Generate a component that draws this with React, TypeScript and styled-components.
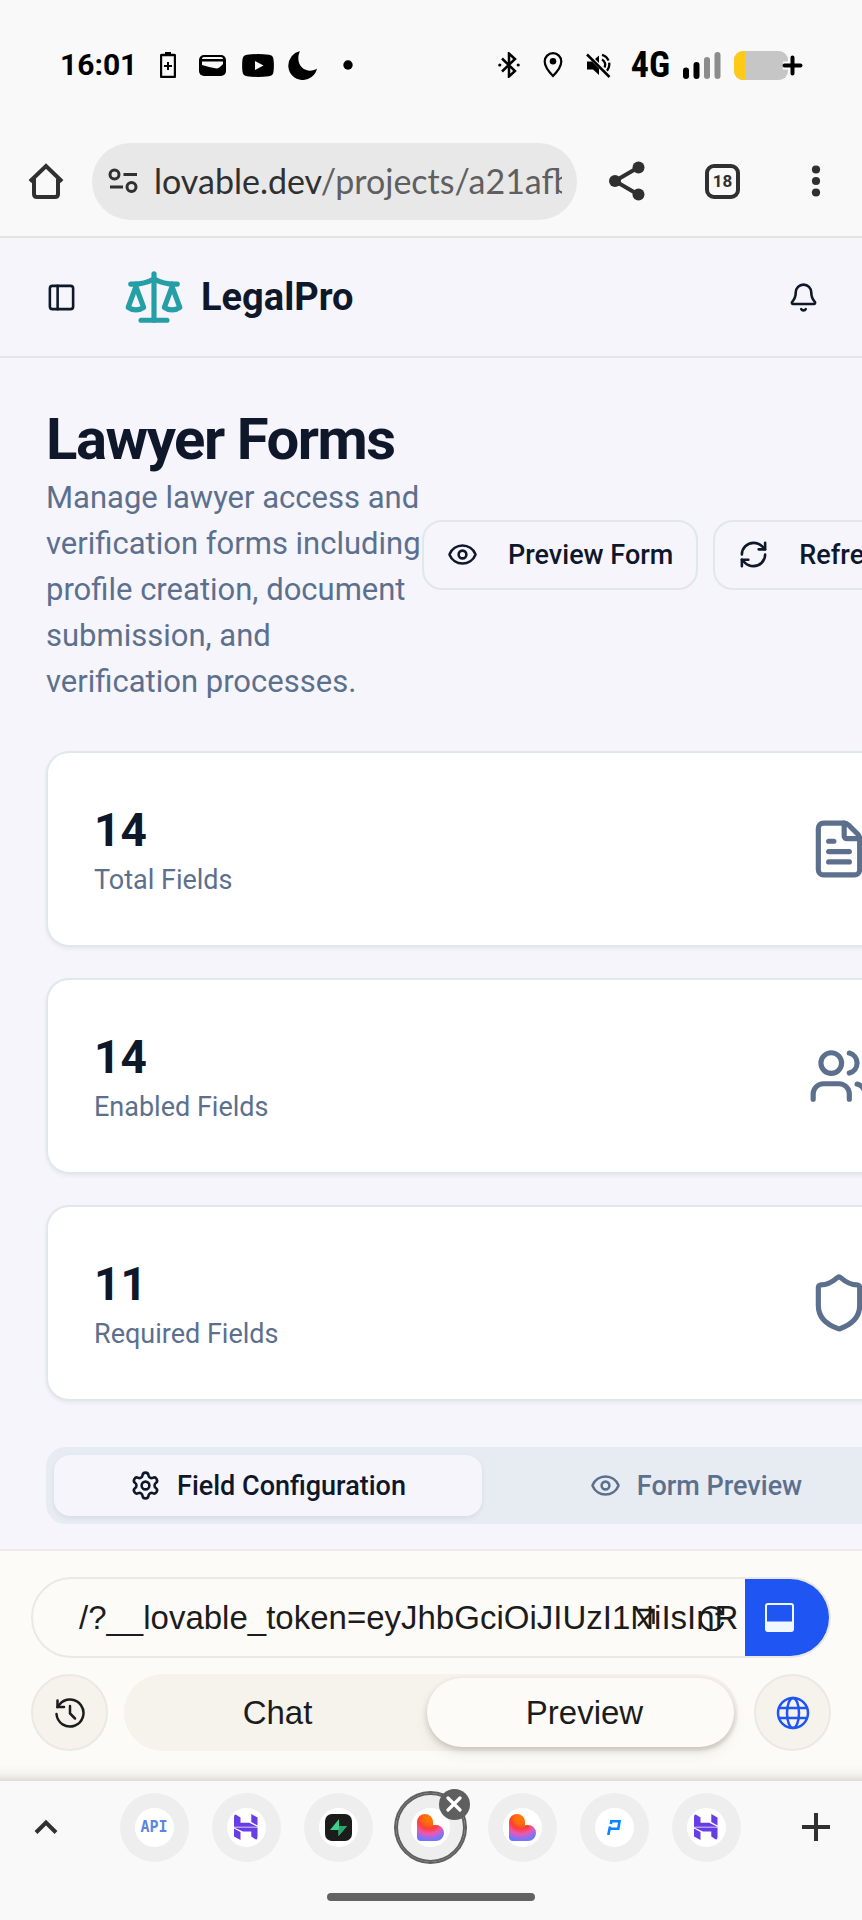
import React from "react";
import styled, { createGlobalStyle } from "styled-components";
import { Bell, Eye, FileText, PanelLeft, RefreshCw, Scale, Settings, Shield, Users } from "lucide-react";

const ink = "#0f172a";
const muted = "#5c708e";
const line = "#e0e7ed";
const canvas = "#f5f5fb";
const chrome = "#f9f9f9";
const cream = "#fcfbf8";
const sand = "#f6f3ed";
const sandLine = "#eae9e4";
const blue = "#1f55f3";

const GlobalStyle = createGlobalStyle`
  *, *::before, *::after { box-sizing: border-box; }
  body { margin: 0; background: ${chrome}; font-family: Roboto, sans-serif; color: ${ink}; }
  button, input { font: inherit; color: inherit; background: none; border: 0; padding: 0; margin: 0; }
  h1, p { margin: 0; }
  svg { display: block; flex: none; }
`;

const Screen = styled.div`
  min-height: 100vh;
  display: flex;
  flex-direction: column;
  overflow: hidden;
`;

/* Phone status bar */
const StatusBar = styled.header`
  height: 130px;
  flex: none;
  display: flex;
  justify-content: space-between;
  padding: 0 59px 0 60px;
  color: #000;
`;

const StatusGroup = styled.div<{ $gap?: number }>`
  display: flex;
  align-items: center;
  gap: ${(p) => p.$gap || 0}px;
`;

const StatusSlot = styled.span`
  width: 45px;
  display: flex;
  justify-content: center;
`;

const Clock = styled.time`
  margin-right: 8px;
  font-weight: 700;
  font-size: 30px;
  line-height: 40px;
`;

const Network = styled.span`
  margin-left: 7px;
  font-size: 36px;
  line-height: 40px;
  font-family: "Liberation Sans Narrow", "Roboto Condensed", "Liberation Sans", sans-serif;
  font-weight: 700;
`;

/* Browser toolbar */
const Toolbar = styled.nav`
  height: 108px;
  flex: none;
  display: flex;
  align-items: center;
  padding: 0 30px 4px 28px;
  border-bottom: 2px solid #e4e4e4;
  color: #303030;
`;

const IconButton = styled.button`
  display: flex;
  align-items: center;
  justify-content: center;
  color: inherit;
`;

const Address = styled.button`
  flex: 1;
  min-width: 0;
  height: 77px;
  margin: 0 32px 0 28px;
  padding: 0 15px;
  border-radius: 39px;
  background: #e8e8e8;
  display: flex;
  align-items: center;
  gap: 15px;
`;

const AddressText = styled.span`
  flex: 1;
  min-width: 0;
  overflow: hidden;
  white-space: nowrap;
  text-align: left;
  font-family: Lato, sans-serif;
  font-size: 34px;
  line-height: 48px;
  color: #5f5f5f;
`;

const Host = styled.span`
  color: #303030;
`;

const ToolbarActions = styled.div`
  display: flex;
  align-items: center;
  gap: 60px;
`;

const TabCount = styled.button`
  width: 35px;
  height: 35px;
  border: 4px solid #303030;
  border-radius: 9px;
  font-size: 17px;
  font-weight: 700;
  line-height: 27px;
  text-align: center;
`;

/* Previewed web page */
const Preview = styled.main`
  flex: 1;
  min-height: 0;
  overflow: hidden;
  background: ${canvas};
`;

const AppHeader = styled.header`
  height: 120px;
  display: flex;
  align-items: center;
  padding: 0 43px 0 46px;
  border-bottom: 2px solid ${line};
`;

const Brand = styled.div`
  flex: 1;
  display: flex;
  align-items: center;
  gap: 16px;
  margin-left: 46px;
  font-size: 38px;
  line-height: 54px;
  font-weight: 700;
`;

const Content = styled.div`
  min-width: 964px;
  padding: 46px 46px 24px;
  display: flex;
  flex-direction: column;
`;

const PageHead = styled.div`
  display: flex;
  align-items: center;
  justify-content: space-between;
  margin-bottom: 46px;
`;

const Title = styled.h1`
  font-size: 58px;
  line-height: 71px;
  font-weight: 700;
  letter-spacing: -0.025em;
`;

const Lead = styled.p`
  font-size: 31px;
  line-height: 46px;
  color: ${muted};
`;

const HeadActions = styled.div`
  flex: none;
  display: flex;
  gap: 15px;
`;

const OutlineButton = styled.button`
  height: 70px;
  display: flex;
  align-items: center;
  gap: 30px;
  padding: 0 23px;
  border: 2px solid ${line};
  border-radius: 20px;
  font-size: 27px;
  line-height: 38px;
  font-weight: 500;
`;

const Stats = styled.div`
  display: grid;
  gap: 31px;
  margin-bottom: 46px;
`;

const StatCard = styled.section`
  display: flex;
  align-items: center;
  justify-content: space-between;
  padding: 46px;
  border: 2px solid ${line};
  border-radius: 23px;
  background: #fff;
  color: ${muted};
  box-shadow: 0 2px 4px rgba(15, 23, 42, 0.06);
`;

const StatValue = styled.p`
  font-size: 46px;
  line-height: 62px;
  font-weight: 700;
  color: ${ink};
`;

const StatLabel = styled.p`
  font-size: 27px;
  line-height: 38px;
`;

const TabList = styled.div`
  display: grid;
  grid-template-columns: 1fr 1fr;
  padding: 8px;
  border-radius: 20px;
  background: #e7ebf2;
`;

const Tab = styled.button<{ $active?: boolean }>`
  height: 61px;
  display: flex;
  align-items: center;
  justify-content: center;
  gap: 16px;
  border-radius: 16px;
  font-size: 27px;
  line-height: 38px;
  font-weight: 500;
  color: ${(p) => (p.$active ? ink : muted)};
  background: ${(p) => (p.$active ? canvas : "transparent")};
  box-shadow: ${(p) => (p.$active ? "0 2px 5px rgba(15, 23, 42, 0.07)" : "none")};
`;

/* Editor controls */
const Dock = styled.section`
  flex: none;
  display: flex;
  flex-direction: column;
  gap: 16px;
  padding: 26px 31px 14px;
  border-top: 2px solid #ecebe8;
  background: ${cream};
  color: #1c1c1c;
  font-family: "Liberation Sans", Arial, sans-serif;
  font-size: 33px;
`;

const PathBar = styled.div`
  height: 81px;
  display: flex;
  border: 2px solid ${sandLine};
  border-radius: 41px;
  overflow: hidden;
`;

const PathField = styled.div`
  flex: 1;
  min-width: 0;
  display: flex;
  position: relative;
  padding-left: 46px;
`;

const PathInput = styled.input`
  flex: 1;
  min-width: 0;
  outline: 0;
`;

const PathTools = styled.div`
  position: absolute;
  top: 0;
  right: 20px;
  height: 100%;
  display: flex;
  align-items: center;
  gap: 43px;
`;

const LayoutButton = styled.button`
  width: 84px;
  padding-left: 20px;
  background: ${blue};
`;

const DockRow = styled.div`
  display: flex;
  gap: 16px;
`;

const RoundButton = styled.button`
  width: 77px;
  height: 77px;
  flex: none;
  display: flex;
  align-items: center;
  justify-content: center;
  border: 2px solid ${sandLine};
  border-radius: 50%;
  background: ${sand};
`;

const Switcher = styled.div`
  flex: 1;
  position: relative;
  display: grid;
  grid-template-columns: 1fr 1fr;
  border-radius: 39px;
  background: ${sand};
`;

const Thumb = styled.span`
  position: absolute;
  top: 4px;
  bottom: 4px;
  left: calc(50% - 4px);
  right: 4px;
  border-radius: 35px;
  background: ${cream};
  box-shadow: 0 3px 6px rgba(40, 36, 20, 0.2), 0 8px 16px rgba(40, 36, 20, 0.05);
`;

const SwitchButton = styled.button`
  position: relative;
  line-height: 40px;
`;

const DockShade = styled.div`
  height: 16px;
  flex: none;
  background: linear-gradient(${cream}, #f4f3f0 55%, #dddcd9);
`;

/* Browser tab strip */
const BottomBar = styled.footer`
  flex: none;
  height: 139px;
  display: flex;
  flex-direction: column;
  align-items: center;
  background: ${chrome};
  color: #303030;
`;

const TabStrip = styled.nav`
  align-self: stretch;
  height: 92px;
  display: flex;
  align-items: center;
  justify-content: space-between;
  padding: 0 32px 0 34px;
`;

const TabIcons = styled.div`
  display: flex;
  gap: 23px;
`;

const SiteTab = styled.button<{ $current?: boolean }>`
  width: 69px;
  height: 69px;
  position: relative;
  display: flex;
  align-items: center;
  justify-content: center;
  border-radius: 50%;
  background: #eee;
  box-shadow: ${(p) => (p.$current ? "inset 0 0 0 2px #5f5f5f, 0 0 0 2px #5f5f5f" : "none")};
`;

const Favicon = styled.span`
  width: 39px;
  height: 39px;
  display: flex;
  align-items: center;
  justify-content: center;
  border-radius: 50%;
  background: #fff;
  color: #5a86e0;
  font-family: "DejaVu Sans Mono", monospace;
  font-size: 15px;
  font-weight: 700;
`;

const CloseBadge = styled.span`
  position: absolute;
  top: -4px;
  right: -5px;
  width: 31px;
  height: 31px;
  display: flex;
  align-items: center;
  justify-content: center;
  border-radius: 50%;
  background: #5f5f5f;
`;

const GestureBar = styled.div`
  width: 208px;
  height: 8px;
  margin-top: 20px;
  border-radius: 4px;
  background: #636363;
`;

const BatterySaver = () => (
  <svg width="16" height="26" viewBox="0 0 16 26">
    <path d="M5 0h6v3H5z" />
    <rect x="1" y="3" width="14" height="22" rx="1" fill="none" stroke="#000" strokeWidth="2.400" />
    <path d="M7 10h2v3h3v2H9v3H7v-3H4v-2h3z" />
  </svg>
);
const Wallet = () => (
  <svg width="27" height="21" viewBox="0 0 27 21">
    <rect width="27" height="21" rx="5" />
    <path d="M3 4q0-2 2-2h17q2 0 2 2z" fill="#f9f9f9" />
    <path d="M3 6.500h21v2.500q-4 4.500-6.500 4.500Q10 12 3 10z" fill="#f9f9f9" />
  </svg>
);
const Video = () => (
  <svg width="32" height="23" viewBox="0 0 32 23">
    <path d="M5 .8Q16-.6 27 .8q4 .4 4.500 4.500.8 6.200 0 12.400Q31 21.800 27 22.200 16 23.600 5 22.200 1 21.800.5 17.700q-.8-6.200 0-12.400Q1 1.200 5 .8z" />
    <path d="M13 7l8.500 4.500L13 16z" fill="#f9f9f9" />
  </svg>
);
const Crescent = () => (
  <svg width="29" height="29" viewBox="0 0 29 29">
    <path d="M12 .3A14.500 14.500 0 1 0 29 17.500c-4 3-11 3-15-1C9.500 12 9.500 5 12 .3z" />
  </svg>
);
const Dot = () => (
  <svg width="10" height="10" viewBox="0 0 10 10">
    <circle cx="5" cy="5" r="4.700" />
  </svg>
);
const Bluetooth = () => (
  <svg width="22" height="26" viewBox="0 0 22 26" fill="none" stroke="#000" strokeWidth="2.500">
    <path d="M4 6.500l13 12.500-6 5.500v-23l6 5.500L4 19.500" />
    <circle cx="1.800" cy="13" r="1.600" fill="#000" stroke="none" />
    <circle cx="20.200" cy="13" r="1.600" fill="#000" stroke="none" />
  </svg>
);
const Pin = () => (
  <svg width="20" height="26" viewBox="0 0 20 26">
    <path d="M10 1.200a8.300 8.300 0 0 0-8.300 8.300C1.700 15.500 10 24 10 24s8.300-8.500 8.300-14.500A8.300 8.300 0 0 0 10 1.200z" fill="none" stroke="#000" strokeWidth="2.200" />
    <circle cx="10" cy="9.300" r="3.300" />
  </svg>
);
const Muted = () => (
  <svg width="25" height="25" viewBox="0 0 25 25">
    <path d="M1 8.500h5l7 7V22l-6-5.500H1zM9 6l4-3.500V10z" />
    <path d="M1 1.500L23.500 24" stroke="#000" strokeWidth="2.500" />
    <path d="M16 1.800a10 10 0 0 1 5 16M16 6.500a6 6 0 0 1 2.500 8" fill="none" stroke="#000" strokeWidth="2.300" strokeDasharray="9 2" />
  </svg>
);
const Signal = () => (
  <svg width="38" height="27" viewBox="0 0 38 27">
    <rect y="15.500" width="6" height="11.500" rx="3" />
    <rect x="10.500" y="10" width="6" height="17" rx="3" />
    <rect x="21" y="5" width="6" height="22" rx="3" fill="#8c8c8c" />
    <rect x="31.500" width="6" height="27" rx="3" fill="#8c8c8c" />
  </svg>
);
const Battery = () => (
  <svg width="69" height="29" viewBox="0 0 69 29">
    <rect width="54" height="29" rx="9" fill="#c6c6c6" />
    <path d="M11 0H9a9 9 0 0 0-9 9v11a9 9 0 0 0 9 9h2z" fill="#fec917" />
    <path d="M49 14.500h19M58.500 5v19" stroke="#f9f9f9" strokeWidth="8" />
    <path d="M50.500 14.500h16M58.500 6.500v16" stroke="#000" strokeWidth="4" strokeLinecap="round" />
  </svg>
);
const HomeIcon = () => (
  <svg width="36" height="36" viewBox="0 0 36 36" fill="none" stroke="#303030" strokeWidth="4">
    <path d="M2 18.500L18 3l16 15.500" />
    <path d="M6 16v15q0 3 3 3h18q3 0 3-3V16" />
  </svg>
);
const SiteSettings = () => (
  <svg width="32" height="26" viewBox="0 0 32 26" fill="none" stroke="#303030" strokeWidth="3">
    <circle cx="7.500" cy="6.500" r="4.500" />
    <path d="M16.500 6.500H30M3 19h13" />
    <circle cx="24.500" cy="19" r="4.500" />
  </svg>
);
const Share = () => (
  <svg width="36" height="40" viewBox="0 0 36 40" fill="#303030">
    <path d="M30 6L6 20l24 14" fill="none" stroke="#303030" strokeWidth="4" />
    <circle cx="29.500" cy="6.500" r="6" />
    <circle cx="6" cy="20" r="6" />
    <circle cx="29.500" cy="33.500" r="6" />
  </svg>
);
const More = () => (
  <svg width="32" height="32" viewBox="0 0 32 32" fill="#303030">
    <circle cx="16" cy="4.500" r="4.100" />
    <circle cx="16" cy="16" r="4.100" />
    <circle cx="16" cy="27.500" r="4.100" />
  </svg>
);
const OpenOut = () => (
  <svg width="20" height="20" viewBox="0 0 20 20" fill="none" stroke="#1c1c1c" strokeWidth="2.500">
    <path d="M3 2h14.500v14M17.500 2L2 18" />
  </svg>
);
const Reload = () => (
  <svg width="26" height="26" viewBox="0 0 26 26" fill="none" stroke="#1c1c1c" strokeWidth="2.500">
    <path d="M24 17a11.500 11.500 0 1 1-1.500-9.500M24 1.500V9h-7.500" />
  </svg>
);
const PanelBottomIcon = () => (
  <svg width="29" height="29" viewBox="0 0 29 29">
    <rect x="1" y="1" width="27" height="27" rx="2" fill="none" stroke="#f0f8ff" strokeWidth="2" />
    <path d="M1 18.500h27V28H1z" fill="#f0f8ff" />
  </svg>
);
const HistoryIcon = () => (
  <svg width="30" height="30" viewBox="0 0 30 30" fill="none" stroke="#1c1c1c" strokeWidth="2.500" strokeLinecap="round">
    <path d="M1.500 16A13.500 13.500 0 1 0 4.500 6.500L2.500 9" />
    <path d="M2.500 2.500V9H9M15 8v7.500l5 5" />
  </svg>
);
const GlobeIcon = () => (
  <svg width="34" height="34" viewBox="0 0 34 34" fill="none" stroke={blue} strokeWidth="2.500">
    <circle cx="17" cy="17" r="15" />
    <ellipse cx="17" cy="17" rx="6" ry="15" />
    <path d="M3 12h28M3 22h28" />
  </svg>
);
const Chevron = () => (
  <svg width="24" height="16" viewBox="0 0 24 16" fill="none" stroke="#303030" strokeWidth="4">
    <path d="M2 13.500L12 3.500l10 10" />
  </svg>
);
const Plus = () => (
  <svg width="28" height="28" viewBox="0 0 28 28" fill="none" stroke="#303030" strokeWidth="4">
    <path d="M14 0v28M0 14h28" />
  </svg>
);
const Cross = () => (
  <svg width="16" height="16" viewBox="0 0 16 16" fill="none" stroke="#fff" strokeWidth="3.200" strokeLinecap="round">
    <path d="M2 2l12 12M14 2L2 14" />
  </svg>
);
const HostMark = () => (
  <svg width="24" height="26" viewBox="0 0 24 26" fill="#673de6">
    <path d="M0 3.500q0-4 2.500-2.500L6.500 3.500V8.700h8.700l8.300 4H0zM17.300 8V0l6.200 3.500v8z" />
    <path d="M6.500 18v8L0 22.500v-8zM23.500 22.500q0 4-2.500 2.500l-3.700-2.500v-5H9L0 13.500h23.500z" />
  </svg>
);
const BoltMark = () => (
  <svg width="27" height="27" viewBox="0 0 27 27">
    <rect width="27" height="27" rx="7" fill="#1c1c1c" />
    <path d="M14 5v7H22L13.500 22V16H5z" fill="#3ecf8e" />
    <path d="M14 12h8L13.500 22z" fill="#2ba56e" />
  </svg>
);
const HeartMark = ({ id }: { id: string }) => (
  <svg width="27" height="27" viewBox="0 0 27 27">
    <defs>
      <radialGradient id={id} gradientUnits="userSpaceOnUse" cx="12" cy="4" r="25">
        <stop offset="0" stopColor="#ff7b00" />
        <stop offset="0.250" stopColor="#ff6a10" />
        <stop offset="0.430" stopColor="#ff4030" />
        <stop offset="0.640" stopColor="#ea58b8" />
        <stop offset="0.900" stopColor="#6b78ff" />
      </radialGradient>
    </defs>
    <path d="M8 0a8 8 0 0 1 8 8v3h3a8 8 0 0 1 0 16H4q-4 0-4-4V8a8 8 0 0 1 8-8z" fill={`url(#${id})`} />
  </svg>
);
const FlagMark = () => (
  <svg width="14" height="15" viewBox="0 0 14 15" fill="none" stroke="#0a84ff" strokeWidth="2.600">
    <path d="M1.300 15L3 6.500M4 1.300h8.500L11.300 8.700H3" />
    <path d="M4.500 0L3.800 4" />
  </svg>
);

const notices = [
  { name: "battery", Icon: BatterySaver },
  { name: "wallet", Icon: Wallet },
  { name: "video", Icon: Video },
  { name: "night", Icon: Crescent },
  { name: "more", Icon: Dot },
];

const stats = [
  { value: "14", label: "Total Fields", Icon: FileText },
  { value: "14", label: "Enabled Fields", Icon: Users },
  { value: "11", label: "Required Fields", Icon: Shield },
];

const siteTabs = [
  { name: "API docs", icon: "API" },
  { name: "Hosting", icon: <HostMark /> },
  { name: "Database", icon: <BoltMark /> },
  { name: "Lovable project", icon: <HeartMark id="heart-a" />, current: true },
  { name: "Lovable", icon: <HeartMark id="heart-b" /> },
  { name: "Payments", icon: <FlagMark /> },
  { name: "Hosting panel", icon: <HostMark /> },
];

export default function App() {
  return (
    <Screen>
      <GlobalStyle />
      <StatusBar>
        <StatusGroup>
          <Clock>16:01</Clock>
          {notices.map(({ name, Icon }) => (
            <StatusSlot key={name}><Icon /></StatusSlot>
          ))}
        </StatusGroup>
        <StatusGroup $gap={13}>
          <StatusGroup $gap={23}>
            <Bluetooth />
            <Pin />
            <Muted />
          </StatusGroup>
          <Network>4G</Network>
          <Signal />
          <Battery />
        </StatusGroup>
      </StatusBar>

      <Toolbar aria-label="Browser">
        <IconButton aria-label="Home"><HomeIcon /></IconButton>
        <Address>
          <SiteSettings />
          <AddressText><Host>lovable.dev</Host>/projects/a21afb</AddressText>
        </Address>
        <ToolbarActions>
          <IconButton aria-label="Share"><Share /></IconButton>
          <TabCount>18</TabCount>
          <IconButton aria-label="More"><More /></IconButton>
        </ToolbarActions>
      </Toolbar>

      <Preview>
        <AppHeader>
          <IconButton aria-label="Toggle sidebar"><PanelLeft size={31} /></IconButton>
          <Brand>
            <Scale size={62} color="#259fa6" />
            LegalPro
          </Brand>
          <IconButton aria-label="Notifications"><Bell size={31} /></IconButton>
        </AppHeader>
        <Content>
          <PageHead>
            <div>
              <Title>Lawyer Forms</Title>
              <Lead>
                Manage lawyer access and verification forms including profile creation, document
                submission, and verification processes.
              </Lead>
            </div>
            <HeadActions>
              <OutlineButton><Eye size={31} />Preview Form</OutlineButton>
              <OutlineButton><RefreshCw size={31} />Refresh</OutlineButton>
            </HeadActions>
          </PageHead>
          <Stats>
            {stats.map(({ value, label, Icon }) => (
              <StatCard key={label}>
                <div>
                  <StatValue>{value}</StatValue>
                  <StatLabel>{label}</StatLabel>
                </div>
                <Icon size={62} />
              </StatCard>
            ))}
          </Stats>
          <TabList role="tablist">
            <Tab role="tab" aria-selected="true" $active><Settings size={31} />Field Configuration</Tab>
            <Tab role="tab" aria-selected="false"><Eye size={31} />Form Preview</Tab>
          </TabList>
        </Content>
      </Preview>

      <Dock>
        <PathBar>
          <PathField>
            <PathInput aria-label="Preview path" defaultValue="/?__lovable_token=eyJhbGciOiJIUzI1NiIsInR" />
            <PathTools>
              <IconButton aria-label="Open in new tab"><OpenOut /></IconButton>
              <IconButton aria-label="Reload preview"><Reload /></IconButton>
            </PathTools>
          </PathField>
          <LayoutButton aria-label="Toggle bottom panel"><PanelBottomIcon /></LayoutButton>
        </PathBar>
        <DockRow>
          <RoundButton aria-label="History"><HistoryIcon /></RoundButton>
          <Switcher>
            <Thumb />
            <SwitchButton>Chat</SwitchButton>
            <SwitchButton>Preview</SwitchButton>
          </Switcher>
          <RoundButton aria-label="Publish"><GlobeIcon /></RoundButton>
        </DockRow>
      </Dock>
      <DockShade />

      <BottomBar>
        <TabStrip aria-label="Open tabs">
          <IconButton aria-label="Show all tabs"><Chevron /></IconButton>
          <TabIcons>
            {siteTabs.map((t) => (
              <SiteTab key={t.name} aria-label={t.name} $current={t.current}>
                <Favicon>{t.icon}</Favicon>
                {t.current && <CloseBadge><Cross /></CloseBadge>}
              </SiteTab>
            ))}
          </TabIcons>
          <IconButton aria-label="New tab"><Plus /></IconButton>
        </TabStrip>
        <GestureBar />
      </BottomBar>
    </Screen>
  );
}
